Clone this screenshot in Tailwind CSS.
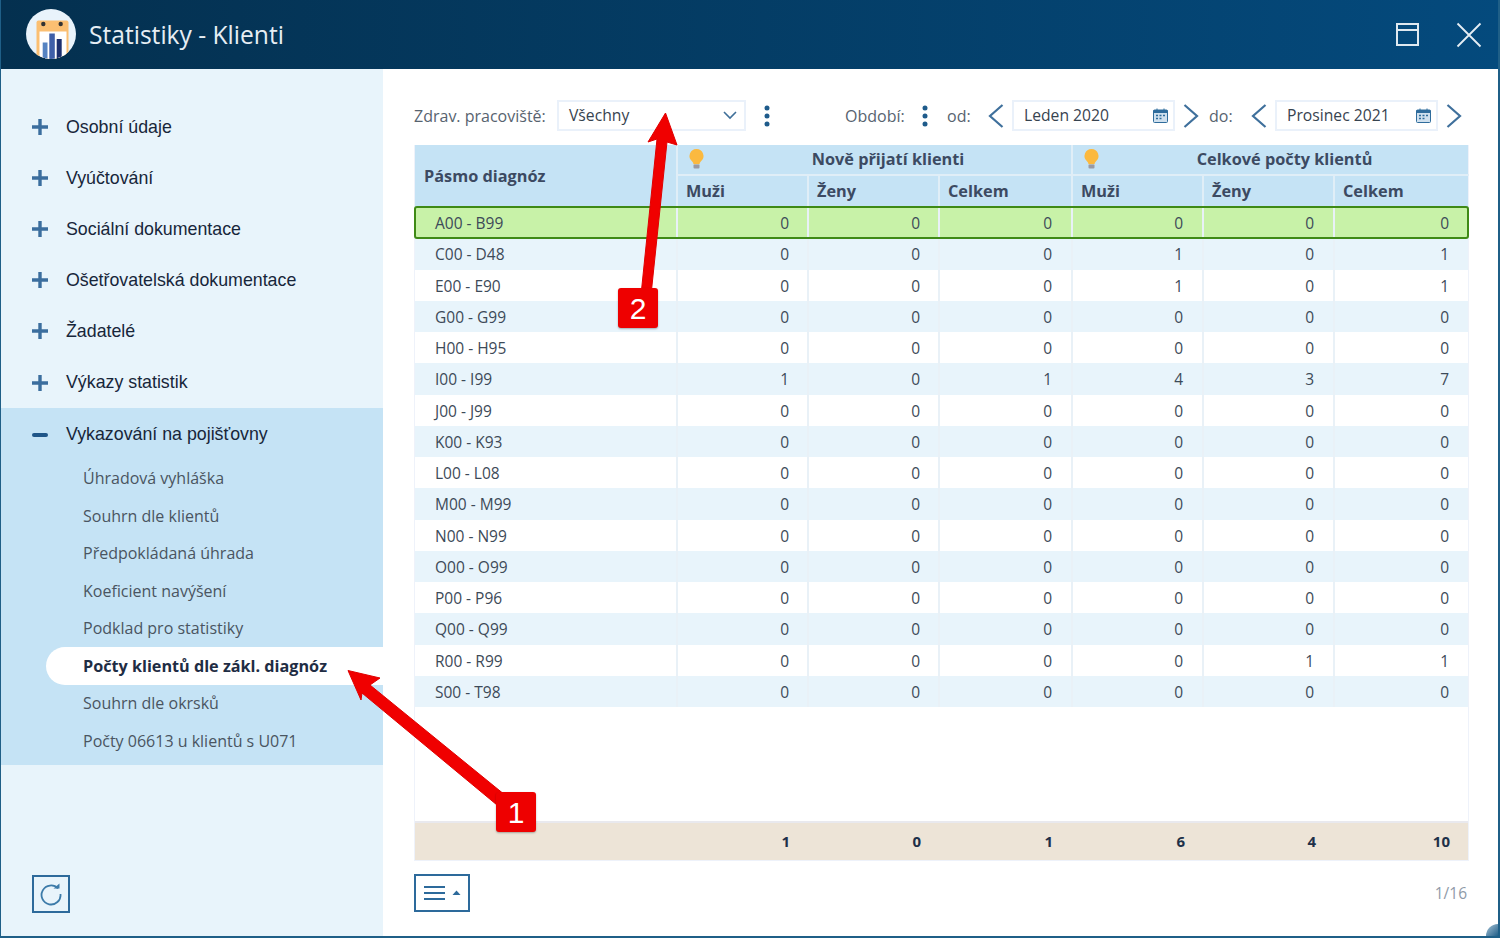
<!DOCTYPE html>
<html lang="cs">
<head>
<meta charset="UTF-8">
<title>Statistiky - Klienti</title>
<script src="https://cdn.jsdelivr.net/npm/@tailwindcss/browser@4"></script>
</head>
<body class="bg-white">
<div class="relative w-[1500px] h-[938px] overflow-hidden flex flex-col border-l border-r-2 border-b-2 border-[#1f5f87] font-['Open_Sans',sans-serif] text-[#3d4a58]">

  <!-- title bar -->
  <header class="h-[69px] -ml-[1px] -mr-[2px] shrink-0 flex items-center pl-[26px] bg-gradient-to-r from-[#04304f] to-[#044a7d]">
    <svg class="w-[50px] h-[50px] -mt-[2px]" viewBox="0 0 50 50">
      <defs><clipPath id="logo"><circle cx="25" cy="25" r="25"/></clipPath></defs>
      <circle cx="25" cy="25" r="25" fill="#e9f3fb"/>
      <g clip-path="url(#logo)">
        <rect x="10.500" y="11.500" width="32" height="40" rx="2" fill="#fbbf72"/>
        <rect x="13.500" y="22.500" width="27" height="30" fill="#fff"/>
        <circle cx="17.300" cy="15" r="2.200" fill="#333"/>
        <circle cx="34.700" cy="15" r="2.200" fill="#333"/>
        <rect x="16.700" y="33.500" width="4.800" height="18" fill="#5583c2"/>
        <rect x="23.300" y="24.500" width="5.500" height="27" fill="#3f5fa8"/>
        <rect x="30.700" y="30" width="5" height="22" fill="#1c2f6e"/>
      </g>
    </svg>
    <h1 class="ml-[13px] mt-[2px] text-[24.600px] text-[#e6eef4] leading-none">Statistiky - Klienti</h1>
    <div class="ml-auto flex items-center">
      <svg class="w-[24px] h-[24px]" viewBox="0 0 24 24" fill="none" stroke="#dfe9f0" stroke-width="2"><rect x="1" y="1" width="21" height="21"/><path d="M1 7h21"/></svg>
      <svg class="ml-[36px] mr-[18px] w-[26px] h-[26px]" viewBox="0 0 26 26" fill="none" stroke="#e6eef4" stroke-width="1.800"><path d="M1.500 1.500l23 23M24.500 1.500l-23 23"/></svg>
    </div>
  </header>

  <div class="flex-1 flex min-h-0">
    <!-- sidebar -->
    <aside class="w-[382px] shrink-0 bg-[#e8f4fb] flex flex-col pt-[32px] font-['Liberation_Sans',sans-serif] text-[17.800px] text-[#17263a]">
      <nav id="menu" class="flex flex-col"></nav>
      <div class="bg-[#c5e3f5] h-[357px]">
        <div class="h-[52px] pt-[2px] flex items-center pl-[31px]">
          <span class="w-[16px] h-[4px] rounded-full bg-[#1f5688]"></span>
          <span class="ml-[18px]">Vykazování na pojišťovny</span>
        </div>
        <ul id="submenu" class="font-['Open_Sans',sans-serif] text-[16px] text-[#4a5561]"></ul>
      </div>
      <button class="mt-[110px] ml-[31px] w-[38px] h-[38px] border-2 border-[#2d6a9b] flex items-center justify-center">
        <svg class="w-[24px] h-[24px]" viewBox="0 0 24 24" fill="none" stroke="#3c7ba9" stroke-width="1.800"><path d="M19 6.500A9.500 9.500 0 1 0 21.500 12"/><path d="M14.500 6.500h6v-5z" fill="#3c7ba9" stroke="none"/></svg>
      </button>
    </aside>

    <!-- content -->
    <main class="flex-1 min-w-0 flex flex-col pl-[31px] pr-[30px]">
      <div class="h-[76px] shrink-0 flex items-center text-[16px] text-[#57636f] pt-[18px] pb-[1px]">
        <span class="w-[132px] shrink-0 whitespace-nowrap">Zdrav. pracoviště:</span>
        <div class="ml-[11px] w-[189px] h-[31px] shrink-0 border-2 border-[#eaf1fa] flex items-center pl-[10px] pr-[7px] text-[15.700px] text-[#37434f]">
          <span>Všechny</span>
          <svg class="ml-auto w-[14px] h-[9px]" viewBox="0 0 14 9" fill="none" stroke="#3f6f99" stroke-width="1.600"><path d="M1 1l6 6 6-6"/></svg>
        </div>
        <svg class="ml-[18px] w-[6px] h-[22px]" viewBox="0 0 6 22" fill="#1e5b8b"><circle cx="3" cy="3" r="2.500"/><circle cx="3" cy="11" r="2.500"/><circle cx="3" cy="19" r="2.500"/></svg>
        <span class="ml-[75px] w-[61px] shrink-0">Období:</span>
        <svg class="ml-[16px] w-[6px] h-[22px]" viewBox="0 0 6 22" fill="#1e5b8b"><circle cx="3" cy="3" r="2.500"/><circle cx="3" cy="11" r="2.500"/><circle cx="3" cy="19" r="2.500"/></svg>
        <span class="ml-[19px] w-[24px] shrink-0">od:</span>
        <svg class="ml-[17px] w-[16px] h-[24px]" viewBox="0 0 16 24" fill="none" stroke="#3f709c" stroke-width="2.200"><path d="M14.500 1L2 12l12.500 11"/></svg>
        <div class="ml-[8px] w-[163px] h-[31px] shrink-0 border-2 border-[#eaf1fa] flex items-center pl-[10px] pr-[5px] text-[15.700px] text-[#37434f]">
          <span>Leden 2020</span>
          <svg class="ml-auto w-[15px] h-[15px]" viewBox="0 0 15 15"><rect x="0.500" y="2" width="14" height="12.500" rx="1" fill="#cfe0ee" stroke="#2f6c9c"/><rect x="0.500" y="2" width="14" height="3" fill="#2f6c9c"/><path d="M4 0.500v2M11 0.500v2" stroke="#2f6c9c"/><path d="M3 7.500h2M6.500 7.500h2M10 7.500h2M3 10.500h2M6.500 10.500h2" stroke="#2f6c9c" stroke-width="1.500"/></svg>
        </div>
        <svg class="ml-[8px] w-[16px] h-[24px]" viewBox="0 0 16 24" fill="none" stroke="#3f709c" stroke-width="2.200"><path d="M1.500 1L14 12 1.500 23"/></svg>
        <span class="ml-[10px] w-[24px] shrink-0">do:</span>
        <svg class="ml-[18px] w-[16px] h-[24px]" viewBox="0 0 16 24" fill="none" stroke="#3f709c" stroke-width="2.200"><path d="M14.500 1L2 12l12.500 11"/></svg>
        <div class="ml-[8px] w-[163px] h-[31px] shrink-0 border-2 border-[#eaf1fa] flex items-center pl-[10px] pr-[5px] text-[15.700px] text-[#37434f]">
          <span>Prosinec 2021</span>
          <svg class="ml-auto w-[15px] h-[15px]" viewBox="0 0 15 15"><rect x="0.500" y="2" width="14" height="12.500" rx="1" fill="#cfe0ee" stroke="#2f6c9c"/><rect x="0.500" y="2" width="14" height="3" fill="#2f6c9c"/><path d="M4 0.500v2M11 0.500v2" stroke="#2f6c9c"/><path d="M3 7.500h2M6.500 7.500h2M10 7.500h2M3 10.500h2M6.500 10.500h2" stroke="#2f6c9c" stroke-width="1.500"/></svg>
        </div>
        <svg class="ml-[8px] w-[16px] h-[24px]" viewBox="0 0 16 24" fill="none" stroke="#3f709c" stroke-width="2.200"><path d="M1.500 1L14 12 1.500 23"/></svg>
      </div>

      <!-- table -->
      <div class="h-[716px] w-[1055px] shrink-0 flex flex-col border-x border-b border-[#eef2fa] text-[15.500px]">
        <div class="h-[62px] shrink-0 grid grid-cols-[261px_131px_131px_133px_131px_131px_136px] grid-rows-[31px_31px] bg-[#c5e3f5] font-bold text-[#3c4a62] text-[16.300px]">
          <div class="row-span-2 flex items-center pl-[9px]">Pásmo diagnóz</div>
          <div class="col-span-3 relative flex items-center justify-center pl-[27px] border-l-2 border-b-2 border-[#e0eef7]">
            <svg class="absolute left-[10px] top-[3px] w-[17px] h-[22px]" viewBox="0 0 17 22"><path d="M8.500 1a7 7 0 0 0-4.500 12.300c1 1 1.500 2 1.500 3h6c0-1 .5-2 1.500-3A7 7 0 0 0 8.500 1z" fill="#fbb93f"/><rect x="5.500" y="16.500" width="6" height="4" rx="1" fill="#9a9aa3"/></svg>
            <span>Nově přijatí klienti</span>
          </div>
          <div class="col-span-3 relative flex items-center justify-center pl-[27px] border-l-2 border-b-2 border-[#e0eef7]">
            <svg class="absolute left-[10px] top-[3px] w-[17px] h-[22px]" viewBox="0 0 17 22"><path d="M8.500 1a7 7 0 0 0-4.500 12.300c1 1 1.500 2 1.500 3h6c0-1 .5-2 1.500-3A7 7 0 0 0 8.500 1z" fill="#fbb93f"/><rect x="5.500" y="16.500" width="6" height="4" rx="1" fill="#9a9aa3"/></svg>
            <span>Celkové počty klientů</span>
          </div>
          <div class="flex items-center pb-[1px] pl-[8px] border-l-2 border-[#e0eef7]">Muži</div>
          <div class="flex items-center pb-[1px] pl-[8px] border-l-2 border-[#e0eef7]">Ženy</div>
          <div class="flex items-center pb-[1px] pl-[8px] border-l-2 border-[#e0eef7]">Celkem</div>
          <div class="flex items-center pb-[1px] pl-[8px] border-l-2 border-[#e0eef7]">Muži</div>
          <div class="flex items-center pb-[1px] pl-[8px] border-l-2 border-[#e0eef7]">Ženy</div>
          <div class="flex items-center pb-[1px] pl-[8px] border-l-2 border-[#e0eef7]">Celkem</div>
        </div>
        <div id="rows" class="flex-1 min-h-0"></div>
        <div class="h-[39px] shrink-0 grid grid-cols-[261px_131px_131px_133px_131px_131px_136px] items-center bg-[#ede4d7] border-t-2 border-[#e9e9ee] font-bold text-[#1e3048] text-[15px] text-right">
          <div></div><div class="pr-[17px]">1</div><div class="pr-[17px]">0</div><div class="pr-[18px]">1</div><div class="pr-[17px]">6</div><div class="pr-[17px]">4</div><div class="pr-[19px]">10</div>
        </div>
      </div>

      <div class="flex items-start mt-[13px]">
        <button class="w-[56px] h-[38px] border-2 border-[#2d6a9b] flex items-center pl-[8px]">
          <svg class="w-[21px] h-[16px]" viewBox="0 0 21 16" fill="none" stroke="#2d6a9b" stroke-width="2.200"><path d="M0 2h21M0 8h21M0 14h21"/></svg>
          <svg class="ml-[7px] w-[9px] h-[6px]" viewBox="0 0 9 6" fill="#2d6a9b"><path d="M4.500 0.500l4 4.500h-8z"/></svg>
        </button>
        <span class="ml-auto mt-[8px] mr-[1px] text-[15.500px] text-[#8f9aa8]">1/16</span>
      </div>
    </main>
  </div>

  <!-- annotation arrows -->
  <svg class="absolute z-20 -left-[1px] top-0 w-[1500px] h-[938px] pointer-events-none" viewBox="0 0 1500 938">
    <path d="M348 670.500L380 678 370 685 505 795 497 805 362 693 361 700z" fill="#f00000" stroke="#e00000"/>
    <path d="M665.500 113L677 145 667 142 651 295 641 295 657 139 648 142z" fill="#f00000" stroke="#e00000"/>
  </svg>
  <div class="absolute z-30 left-[495px] top-[792px] w-[40px] h-[40px] rounded-[3px] bg-[#ee0000] text-white text-[30px] font-['Liberation_Sans',sans-serif] flex items-center justify-center shadow-[0_1px_2px_rgba(0,0,0,0.3)]">1</div>
  <div class="absolute z-30 left-[617px] top-[288px] w-[40px] h-[40px] rounded-[3px] bg-[#ee0000] text-white text-[30px] font-['Liberation_Sans',sans-serif] flex items-center justify-center shadow-[0_1px_2px_rgba(0,0,0,0.3)]">2</div>
  <div class="absolute right-0 bottom-0 w-[12px] h-[12px] rounded-tl-full bg-gradient-to-br from-[#a9c7da] to-[#1f5f87]"></div>
</div>

<script>
  // top level menu
  var menu = ['Osobní údaje','Vyúčtování','Sociální dokumentace','Ošetřovatelská dokumentace','Žadatelé','Výkazy statistik'];
  document.getElementById('menu').innerHTML = menu.map(function (m) {
    return '<div class="h-[51.100px] pt-[1px] flex items-center pl-[31px]">' +
      '<svg class="w-[16px] h-[16px]" viewBox="0 0 16 16" fill="#3b6e9e"><path d="M6.300 0h3.400v6.300H16v3.400H9.700V16H6.300V9.700H0V6.300h6.300z"/></svg>' +
      '<span class="ml-[18px]">' + m + '</span></div>';
  }).join('');

  var sub = ['Úhradová vyhláška','Souhrn dle klientů','Předpokládaná úhrada','Koeficient navýšení','Podklad pro statistiky','Počty klientů dle zákl. diagnóz','Souhrn dle okrsků','Počty 06613 u klientů s U071'];
  document.getElementById('submenu').innerHTML = sub.map(function (s, i) {
    if (i == 5) return '<li class="h-[37.500px] ml-[45px] pl-[37px] flex items-center rounded-l-full bg-white font-bold text-[16.200px] text-[#1f2d44]">' + s + '</li>';
    return '<li class="h-[37.500px] pl-[82px] flex items-center">' + s + '</li>';
  }).join('');

  // table rows
  var data = [
    ['A00 - B99',0,0,0,0,0,0],['C00 - D48',0,0,0,1,0,1],['E00 - E90',0,0,0,1,0,1],['G00 - G99',0,0,0,0,0,0],
    ['H00 - H95',0,0,0,0,0,0],['I00 - I99',1,0,1,4,3,7],['J00 - J99',0,0,0,0,0,0],['K00 - K93',0,0,0,0,0,0],
    ['L00 - L08',0,0,0,0,0,0],['M00 - M99',0,0,0,0,0,0],['N00 - N99',0,0,0,0,0,0],['O00 - O99',0,0,0,0,0,0],
    ['P00 - P96',0,0,0,0,0,0],['Q00 - Q99',0,0,0,0,0,0],['R00 - R99',0,0,0,0,1,1],['S00 - T98',0,0,0,0,0,0]
  ];
  document.getElementById('rows').innerHTML = data.map(function (r, i) {
    var bg = i == 0 ? 'bg-[#c8f2a8] z-10 outline-2 -outline-offset-1 outline-[#3f8a16] rounded-[2px]' : (i % 2 ? 'bg-[#e8f4fb]' : 'bg-white');
    var cells = r.map(function (v, j) {
      if (j == 0) return '<div class="pl-[20px] pt-[2px]">' + v + '</div>';
      if (j == 6) return '<div class="h-full pt-[2px] flex items-center justify-end pr-[20px] border-l-2 border-[#e9f1f7]">' + v + '</div>';
      if (j < 3) return '<div class="h-full pt-[2px] flex items-center justify-end pr-[18px] border-l-2 border-[#e9f1f7]">' + v + '</div>';
      return '<div class="h-full pt-[2px] flex items-center justify-end pr-[19px] border-l-2 border-[#e9f1f7]">' + v + '</div>';
    }).join('');
    return '<div class="relative h-[31.250px] grid grid-cols-[261px_131px_131px_133px_131px_131px_136px] items-center ' + bg + '">' + cells + '</div>';
  }).join('');
</script>
</body>
</html>
